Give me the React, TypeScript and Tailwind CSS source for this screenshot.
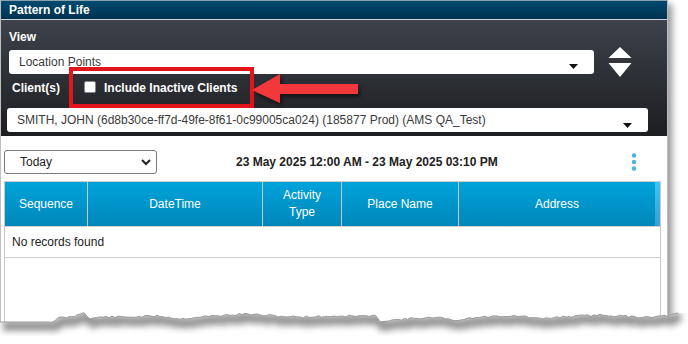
import React from "react";

const tornLine = (() => {
  let s = 11;
  const rnd = () => {
    s = (s * 9301 + 49297) % 233280;
    return s / 233280;
  };
  const base: [number, number][] = [
    [0, 322], [52, 322], [58, 318], [72, 317], [80, 314], [84, 312], [90, 319], [100, 317],
    [130, 317], [160, 316], [180, 319], [200, 317], [215, 316], [245, 314], [275, 316],
    [300, 317], [340, 316], [375, 316], [380, 321], [420, 318], [445, 318], [452, 321],
    [470, 318], [500, 316], [520, 316], [540, 319], [560, 317], [600, 315], [620, 316],
    [640, 317], [668, 316], [678, 313],
  ];
  const pts: [number, number][] = [];
  for (let i = 0; i < base.length - 1; i++) {
    const [x0, y0] = base[i];
    const [x1, y1] = base[i + 1];
    const steps = Math.max(1, Math.round((x1 - x0) / 3));
    for (let k = 0; k < steps; k++) {
      const t = k / steps;
      const x = x0 + (x1 - x0) * t;
      const y = y0 + (y1 - y0) * t + (x0 < 52 ? 0 : (rnd() - 0.5) * 2.0);
      pts.push([x, y - 296]);
    }
  }
  pts.push([base[base.length - 1][0], base[base.length - 1][1] - 296]);
  return pts;
})();

const lineStr = tornLine.map(([x, y]) => `${x.toFixed(1)},${y.toFixed(1)}`).join(" ");
const fillPath = `M0,48 L${tornLine.map(([x, y]) => `${x.toFixed(1)},${y.toFixed(1)}`).join(" L")} L688,${(tornLine[tornLine.length - 1][1]).toFixed(1)} L688,48 Z`;

function Caret() {
  return (
    <svg width="9" height="5" viewBox="0 0 9 5" className="shrink-0">
      <polygon points="0,0 9,0 4.5,5" fill="#111" />
    </svg>
  );
}

export default function App() {
  return (
    <div className="relative w-[688px] h-[344px] overflow-hidden bg-white font-['Liberation_Sans',Arial,sans-serif] text-[12px]">
      {/* Panel */}
      <div className="w-[668px] h-[330px] flex flex-col bg-white border-l border-r border-[#bfbfbf] shadow-[4px_4px_7px_rgba(0,0,0,0.42)]">
        {/* Title bar */}
        <div className="h-[20px] shrink-0 bg-gradient-to-b from-[#004a6f] to-[#00324f] border-t border-[#8da0ab] border-b border-b-[#cdd6dc] pl-[8px] text-white font-bold leading-[18px]">
          Pattern of Life
        </div>
        {/* Dark section */}
        <div className="h-[116px] shrink-0 bg-gradient-to-b from-[#3d424b] to-[#1d1e21] pl-[6px] pt-[10px]">
          <div className="h-[14px] leading-[14px] pl-[2px] text-white font-bold">View</div>
          <div className="mt-[6px] h-[24px] flex items-center">
            <div className="ml-[2px] w-[585px] h-[24px] bg-white rounded-[3px] flex items-center pl-[10px] pr-[16px]">
              <span className="flex-1 text-[#3a3a3a]">Location Points</span>
              <div className="mt-[9px]"><Caret /></div>
            </div>
            <svg width="24" height="31" viewBox="0 0 24 31" className="ml-[14px] shrink-0">
              <polygon points="0.5,11 12,0 23.5,11" fill="#fff" />
              <polygon points="0.5,16 23.5,16 12,30" fill="#fff" />
            </svg>
          </div>
          <div className="h-[34px] flex items-start pt-[7px]">
            <span className="w-[77px] pl-[5px] leading-[14px] text-white font-bold">Client(s)</span>
            <div className="w-[12px] h-[12px] bg-white border border-[#8a8a8a] rounded-[2px] shrink-0" />
            <span className="ml-[8px] leading-[14px] text-white font-bold">Include Inactive Clients</span>
          </div>
          <div className="w-[641px] h-[24px] bg-white rounded-[3px] flex items-center pl-[10px] pr-[16px]">
            <span className="flex-1 text-[#3a3a3a] mt-[-1px]">
              SMITH, JOHN (6d8b30ce-ff7d-49fe-8f61-0c99005ca024) (185877 Prod) (AMS QA_Test)
            </span>
            <div className="mt-[10px]"><Caret /></div>
          </div>
        </div>
        {/* White content */}
        <div className="flex-1 flex flex-col pt-[14px] pl-[3px]">
          <div className="h-[24px] flex items-center">
            <div className="w-[153px] h-[24px] border border-[#7a7a7a] rounded-[3px] flex items-center pl-[15px] pr-[5px]">
              <span className="flex-1 text-[#222]">Today</span>
              <svg width="10" height="7" viewBox="0 0 10 7">
                <polyline points="1,1 5,5 9,1" fill="none" stroke="#222" strokeWidth="2" />
              </svg>
            </div>
            <span className="ml-[79px] font-bold text-[#222]">23 May 2025 12:00 AM - 23 May 2025 03:10 PM</span>
            <svg width="6" height="18" viewBox="0 0 6 18" className="ml-[133px]">
              <circle cx="3" cy="2.5" r="2.2" fill="#4bb3dc" />
              <circle cx="3" cy="9" r="2.2" fill="#4bb3dc" />
              <circle cx="3" cy="15.5" r="2.2" fill="#4bb3dc" />
            </svg>
          </div>
          {/* Grid */}
          <div className="mt-[7px] w-[657px] flex-1 flex flex-col border-l border-r border-[#c8c8c8]">
            <div className="h-[46px] flex border-t border-[#cfcfcf] border-b border-b-[#d0d0d0] text-white leading-[17px]">
              <div className="w-[82px] flex items-center justify-center bg-gradient-to-b from-[#00a3db] to-[#0087b9]">Sequence</div>
              <div className="w-[175px] flex items-center justify-center border-l border-[#c8c8c8] bg-gradient-to-b from-[#00a3db] to-[#0087b9]">DateTime</div>
              <div className="w-[79px] flex items-center justify-center text-center border-l border-[#c8c8c8] bg-gradient-to-b from-[#00a3db] to-[#0087b9]">
                Activity<br />Type
              </div>
              <div className="w-[117px] flex items-center justify-center border-l border-[#c8c8c8] bg-gradient-to-b from-[#00a3db] to-[#0087b9]">Place Name</div>
              <div className="w-[197px] flex items-center justify-center border-l border-[#c8c8c8] bg-gradient-to-b from-[#00a3db] to-[#0087b9]">Address</div>
              <div className="flex-1 bg-gradient-to-b from-[#3cc4f4] to-[#3a9fd0]" />
            </div>
            <div className="h-[31px] flex items-center pl-[7px] border-b border-[#cfcfcf] text-[#222]">No records found</div>
          </div>
        </div>
      </div>

      {/* Torn bottom edge */}
      <svg className="absolute left-0 top-[296px]" width="688" height="48" viewBox="0 0 688 48">
        <defs>
          <clipPath id="belowTorn">
            <path d={fillPath} />
          </clipPath>
          <filter id="tornBlur" x="-5%" y="-100%" width="110%" height="300%">
            <feGaussianBlur stdDeviation="3" />
          </filter>
        </defs>
        <path d={fillPath} fill="#fff" />
        <g clipPath="url(#belowTorn)">
          <polyline points={lineStr} fill="none" stroke="#7a7a7a" strokeOpacity="0.8" strokeWidth="10" transform="translate(3,4)" filter="url(#tornBlur)" />
        </g>
        <polyline points={lineStr} fill="none" stroke="#9a9a9a" strokeWidth="1" />
      </svg>

      {/* Annotation: red box */}
      <div className="absolute left-[69px] top-[67px] w-[185px] h-[41px] border-[4px] border-[#e3151c]" />
      {/* Annotation: arrow */}
      <svg className="absolute left-[248px] top-[70px]" width="120" height="40" viewBox="0 0 120 40">
        <defs>
          <filter id="arrowShadow" x="-10%" y="-30%" width="130%" height="180%">
            <feDropShadow dx="2" dy="3" stdDeviation="2" floodColor="#000" floodOpacity="0.55" />
          </filter>
        </defs>
        <polygon points="4,20 32,4 32,14 110,14 110,24 32,24 32,33" fill="#f2373b" filter="url(#arrowShadow)" />
      </svg>
    </div>
  );
}
